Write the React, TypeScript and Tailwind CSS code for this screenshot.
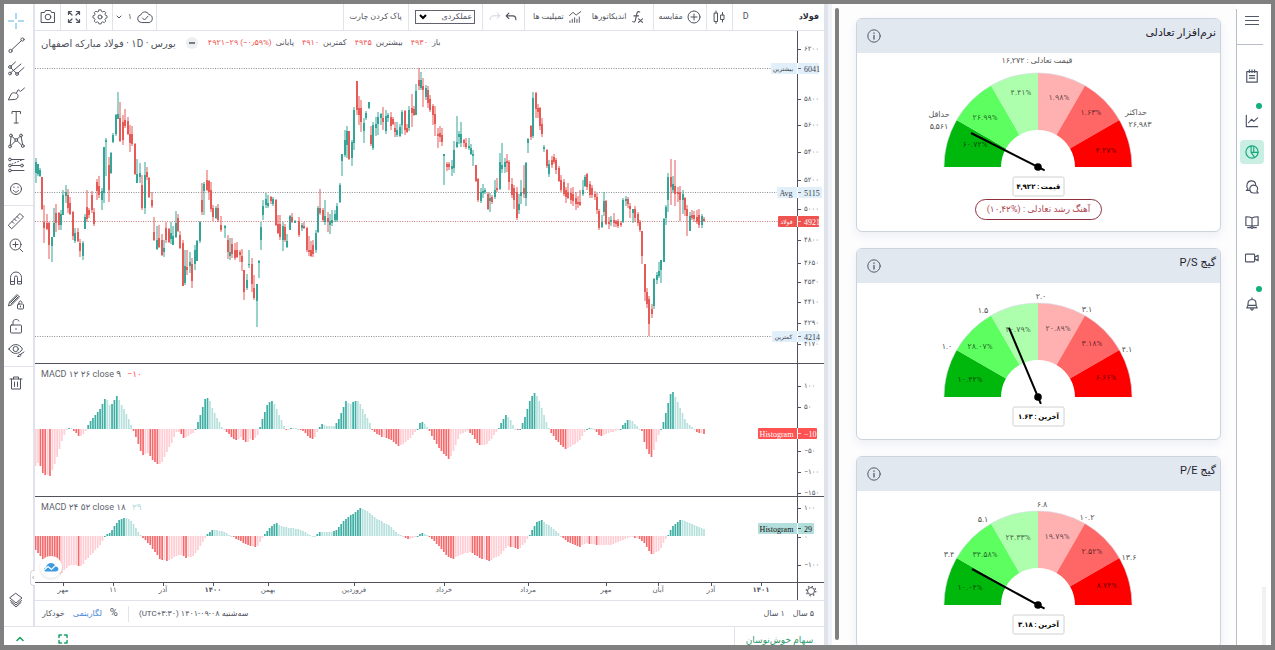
import type { ReactNode } from 'react';

const FA = "font-['Roboto','DejaVu_Sans',sans-serif]";

type Candle = [number, number, number, number, number, 0 | 1];

// x, high, low, body top, body bottom, rising
const candles: Candle[] = [
  [36, 158, 183, 162, 173, 1], [38, 164, 176, 164, 174, 1], [40, 168, 177, 170, 176, 1], [42, 177, 210, 177, 209, 0],
  [44, 205, 243, 222, 228, 0], [47, 214, 230, 223, 229, 0], [49, 222, 259, 223, 245, 0], [52, 237, 262, 237, 246, 1],
  [54, 208, 237, 223, 237, 1], [56, 204, 232, 213, 223, 0], [59, 212, 230, 213, 225, 0], [61, 210, 230, 214, 225, 1],
  [63, 190, 215, 195, 215, 1], [66, 185, 203, 192, 196, 1], [68, 189, 213, 195, 208, 0], [70, 197, 215, 203, 214, 0],
  [73, 211, 240, 212, 236, 0], [75, 228, 243, 233, 241, 1], [78, 228, 242, 232, 241, 0], [80, 239, 257, 243, 251, 0],
  [83, 241, 260, 243, 256, 1], [85, 214, 229, 217, 229, 1], [87, 190, 222, 207, 219, 0], [89, 208, 218, 210, 215, 0],
  [92, 191, 213, 195, 210, 0], [94, 208, 226, 212, 224, 0], [97, 179, 200, 182, 191, 0], [99, 176, 198, 186, 195, 0],
  [102, 188, 210, 191, 200, 1], [104, 147, 203, 147, 193, 1], [106, 138, 176, 140, 142, 1], [109, 157, 202, 165, 190, 0],
  [111, 152, 174, 153, 173, 1], [113, 133, 143, 135, 142, 1], [116, 114, 136, 115, 134, 1], [118, 92, 119, 114, 119, 1],
  [120, 102, 142, 118, 141, 0], [123, 115, 145, 122, 140, 0], [125, 109, 128, 120, 126, 0], [128, 117, 135, 121, 134, 0],
  [130, 125, 152, 134, 143, 0], [132, 126, 146, 134, 144, 0], [135, 143, 175, 144, 174, 0], [137, 159, 183, 174, 183, 1],
  [140, 163, 183, 173, 177, 1], [142, 175, 210, 185, 208, 0], [145, 162, 214, 175, 208, 1], [147, 167, 180, 172, 177, 0],
  [149, 177, 198, 178, 197, 0], [152, 192, 208, 200, 206, 0], [154, 217, 241, 232, 240, 0], [157, 226, 250, 240, 249, 1],
  [159, 225, 248, 238, 247, 0], [162, 234, 256, 240, 255, 0], [164, 240, 257, 248, 252, 1], [166, 222, 243, 228, 240, 0],
  [169, 228, 243, 229, 242, 0], [171, 222, 244, 233, 239, 1], [173, 226, 245, 236, 245, 1], [176, 211, 238, 223, 237, 1],
  [178, 214, 232, 218, 231, 0], [180, 231, 249, 235, 248, 0], [183, 240, 286, 243, 286, 0], [185, 250, 285, 266, 283, 1],
  [187, 250, 275, 267, 270, 0], [190, 252, 273, 262, 266, 1], [192, 258, 288, 264, 281, 0], [195, 245, 270, 250, 264, 1],
  [197, 240, 261, 241, 261, 1], [200, 221, 243, 222, 241, 1], [202, 183, 215, 200, 212, 0], [204, 182, 215, 184, 191, 1],
  [207, 170, 191, 180, 190, 0], [209, 180, 200, 181, 192, 0], [211, 182, 212, 190, 209, 0], [213, 205, 221, 208, 217, 0],
  [216, 206, 219, 208, 218, 1], [218, 204, 222, 208, 220, 0], [221, 216, 232, 225, 230, 0], [225, 225, 238, 226, 228, 1],
  [228, 235, 259, 240, 252, 0], [230, 238, 260, 252, 256, 1], [232, 238, 258, 244, 254, 0], [235, 243, 260, 250, 258, 0],
  [237, 242, 258, 250, 257, 0], [240, 250, 262, 252, 255, 0], [242, 249, 271, 256, 262, 0], [244, 270, 300, 270, 292, 0],
  [247, 274, 290, 280, 288, 1], [249, 250, 268, 264, 265, 1], [252, 258, 292, 264, 284, 0], [254, 275, 300, 288, 298, 0],
  [257, 284, 327, 284, 301, 1], [259, 260, 278, 261, 263, 1], [261, 222, 250, 227, 240, 1], [263, 200, 220, 206, 215, 1],
  [266, 193, 208, 199, 205, 1], [268, 195, 208, 203, 206, 1], [271, 196, 204, 197, 201, 0], [273, 197, 206, 199, 204, 1],
  [276, 199, 226, 200, 225, 0], [278, 215, 234, 224, 233, 0], [280, 215, 240, 224, 237, 0], [283, 222, 251, 226, 240, 1],
  [285, 224, 242, 227, 240, 0], [287, 234, 248, 241, 247, 1], [290, 215, 230, 216, 230, 1], [292, 213, 223, 217, 222, 0],
  [295, 220, 223, 221, 223, 1], [299, 217, 237, 221, 235, 0], [302, 223, 231, 225, 228, 1], [304, 222, 229, 226, 228, 0],
  [307, 227, 252, 228, 250, 0], [309, 236, 256, 250, 252, 0], [311, 241, 257, 250, 256, 0], [313, 240, 257, 245, 254, 0],
  [316, 230, 253, 233, 250, 1], [318, 206, 233, 208, 232, 1], [320, 189, 215, 208, 213, 0], [323, 208, 222, 210, 220, 0],
  [325, 200, 225, 216, 222, 1], [328, 212, 232, 218, 222, 0], [330, 214, 234, 221, 225, 1], [332, 210, 226, 220, 223, 1],
  [335, 210, 222, 214, 220, 1], [337, 203, 222, 206, 220, 1], [340, 183, 203, 185, 202, 1], [342, 154, 176, 154, 161, 1],
  [345, 130, 157, 140, 155, 1], [347, 126, 158, 131, 145, 1], [349, 131, 160, 131, 159, 0], [352, 140, 166, 142, 158, 1],
  [354, 107, 150, 110, 143, 1], [357, 81, 115, 81, 110, 0], [359, 96, 125, 108, 115, 0], [361, 100, 132, 108, 122, 0],
  [364, 118, 143, 123, 131, 1], [366, 111, 120, 113, 118, 1], [369, 102, 109, 102, 108, 1], [371, 126, 146, 135, 144, 0],
  [373, 122, 150, 125, 148, 1], [376, 117, 136, 124, 128, 1], [378, 112, 135, 117, 124, 1], [381, 113, 125, 114, 118, 1],
  [383, 107, 130, 118, 122, 0], [386, 110, 134, 116, 131, 1], [388, 113, 122, 115, 118, 1], [391, 112, 130, 117, 126, 0],
  [393, 117, 125, 119, 124, 0], [395, 122, 137, 128, 132, 0], [397, 122, 137, 130, 135, 1], [400, 124, 137, 127, 136, 1],
  [402, 110, 134, 112, 125, 1], [405, 110, 135, 111, 130, 0], [407, 124, 133, 128, 132, 0], [409, 106, 131, 110, 128, 1],
  [412, 94, 127, 108, 113, 0], [414, 106, 116, 109, 115, 0], [416, 84, 115, 91, 115, 1], [419, 68, 90, 80, 86, 0],
  [421, 72, 90, 80, 88, 1], [423, 78, 107, 86, 90, 0], [426, 85, 100, 88, 97, 1], [428, 86, 108, 90, 103, 0],
  [430, 95, 112, 99, 110, 0], [433, 104, 125, 106, 115, 0], [435, 106, 136, 114, 124, 0], [438, 128, 148, 134, 136, 0],
  [440, 126, 142, 133, 137, 0], [442, 128, 146, 135, 142, 0], [444, 154, 185, 154, 156, 1], [447, 162, 171, 164, 167, 0],
  [449, 162, 170, 164, 167, 0], [452, 160, 176, 166, 169, 1], [454, 141, 173, 150, 168, 1], [457, 116, 148, 142, 147, 1],
  [459, 131, 144, 134, 137, 1], [461, 122, 147, 134, 143, 1], [464, 139, 147, 140, 143, 0], [466, 138, 149, 143, 147, 0],
  [469, 138, 150, 146, 148, 1], [471, 144, 155, 148, 154, 1], [473, 150, 166, 154, 156, 1], [476, 165, 182, 165, 181, 0],
  [478, 178, 202, 179, 200, 0], [481, 188, 203, 192, 201, 1], [483, 184, 198, 191, 193, 1], [485, 188, 194, 190, 192, 1],
  [488, 192, 210, 194, 209, 0], [490, 193, 212, 198, 201, 1], [492, 195, 204, 197, 202, 0], [495, 180, 199, 190, 197, 1],
  [497, 178, 192, 188, 190, 0], [500, 153, 190, 162, 189, 1], [502, 143, 173, 165, 169, 1], [505, 158, 173, 162, 167, 1],
  [507, 154, 172, 161, 163, 0], [509, 160, 190, 162, 182, 0], [512, 178, 198, 184, 195, 0], [514, 185, 209, 188, 200, 0],
  [517, 187, 220, 192, 218, 0], [519, 194, 214, 204, 210, 1], [521, 180, 204, 192, 196, 1], [524, 165, 198, 188, 194, 0],
  [526, 162, 206, 163, 198, 1], [528, 138, 153, 139, 143, 1], [531, 125, 140, 126, 137, 0], [533, 92, 138, 98, 136, 1],
  [536, 92, 118, 93, 109, 0], [538, 104, 118, 108, 112, 0], [540, 107, 130, 108, 126, 0], [542, 118, 137, 124, 134, 0],
  [544, 145, 152, 147, 149, 1], [547, 149, 168, 150, 166, 0], [549, 160, 177, 164, 174, 1], [552, 156, 168, 160, 165, 0],
  [554, 154, 164, 157, 162, 0], [556, 158, 174, 160, 170, 0], [559, 166, 182, 168, 181, 0], [561, 175, 192, 180, 190, 0],
  [564, 179, 196, 182, 194, 0], [566, 187, 203, 190, 197, 0], [568, 183, 199, 192, 198, 0], [571, 188, 204, 193, 200, 0],
  [573, 187, 206, 194, 201, 0], [576, 192, 210, 198, 204, 0], [578, 196, 208, 202, 204, 0], [580, 190, 206, 202, 205, 0],
  [583, 180, 196, 190, 194, 1], [585, 175, 187, 177, 186, 1], [587, 173, 190, 174, 187, 0], [590, 181, 198, 184, 195, 0],
  [592, 185, 198, 188, 195, 0], [595, 191, 200, 194, 197, 0], [597, 193, 214, 197, 210, 0], [599, 209, 230, 211, 228, 0],
  [602, 215, 228, 222, 227, 1], [604, 192, 216, 201, 212, 1], [606, 200, 225, 201, 224, 0], [609, 217, 229, 222, 224, 0],
  [611, 216, 226, 220, 222, 1], [614, 213, 227, 220, 223, 0], [616, 220, 227, 221, 224, 0], [618, 219, 228, 221, 226, 0],
  [621, 221, 227, 223, 225, 0], [623, 198, 223, 200, 222, 1], [626, 196, 206, 199, 201, 1], [628, 197, 208, 199, 204, 0],
  [630, 203, 218, 206, 209, 0], [633, 209, 223, 209, 213, 1], [635, 206, 222, 209, 218, 0], [638, 212, 226, 214, 223, 0],
  [640, 220, 232, 222, 230, 0], [642, 231, 264, 231, 256, 0], [645, 264, 301, 264, 292, 0], [647, 288, 308, 292, 304, 0],
  [649, 296, 336, 299, 324, 0], [652, 304, 318, 309, 314, 0], [654, 278, 309, 279, 306, 1], [657, 272, 284, 275, 280, 1],
  [659, 262, 278, 271, 276, 1], [661, 260, 283, 260, 270, 1], [664, 218, 262, 219, 262, 1], [666, 205, 225, 207, 218, 1],
  [668, 173, 212, 177, 200, 1], [671, 159, 205, 177, 187, 0], [673, 176, 193, 184, 190, 1], [675, 160, 206, 186, 194, 0],
  [678, 187, 202, 192, 194, 0], [680, 186, 221, 192, 200, 0], [683, 190, 214, 194, 200, 1], [685, 197, 216, 198, 210, 0],
  [687, 205, 236, 209, 216, 0], [690, 212, 231, 216, 231, 1], [692, 210, 220, 215, 218, 0], [694, 211, 222, 215, 219, 0],
  [697, 210, 224, 217, 222, 0], [699, 209, 228, 215, 225, 0], [702, 214, 228, 216, 225, 1], [704, 217, 222, 219, 221, 0],
];

// x, y corner points of each histogram outline
const macdFast: number[][] = [
  [35, 467], [38, 463], [40, 465], [43, 474], [50, 476], [53, 468], [58, 455], [62, 440], [66, 431], [69, 428], [72, 428],
  [74, 431], [80, 437], [84, 434], [86, 430], [88, 425], [95, 415], [100, 409], [106, 396], [109, 405], [112, 404], [117, 396],
  [120, 402], [127, 415], [131, 425], [133, 430], [137, 440], [142, 455], [148, 453], [152, 459], [157, 464], [161, 464],
  [164, 458], [172, 442], [176, 432], [180, 432], [183, 438], [188, 436], [193, 433], [195, 430], [200, 416], [205, 399],
  [209, 398], [213, 410], [218, 420], [222, 427], [226, 431], [232, 438], [237, 440], [241, 437], [247, 444], [250, 439],
  [253, 440], [258, 435], [259, 431], [262, 420], [268, 402], [273, 401], [277, 410], [283, 424], [286, 430], [288, 431],
  [290, 428], [296, 428], [299, 430], [304, 431], [309, 438], [314, 439], [318, 430], [321, 424], [328, 426], [334, 426],
  [338, 421], [343, 408], [346, 401], [350, 405], [354, 401], [359, 401], [363, 410], [370, 423], [372, 430], [380, 436],
  [390, 439], [399, 446], [405, 443], [411, 437], [417, 430], [421, 421], [425, 424], [429, 430], [433, 438], [441, 451],
  [449, 459], [454, 450], [460, 434], [467, 431], [473, 435], [478, 445], [486, 445], [492, 438], [498, 430], [502, 421],
  [506, 415], [511, 420], [514, 428], [517, 431], [520, 429], [524, 420], [530, 400], [534, 392], [538, 397], [544, 415],
  [548, 426], [550, 431], [557, 441], [565, 449], [572, 446], [580, 440], [586, 429], [591, 427], [595, 430], [600, 436],
  [606, 434], [615, 431], [620, 430], [623, 425], [628, 420], [632, 421], [638, 427], [642, 431], [645, 445], [651, 458],
  [654, 449], [658, 437], [661, 429], [664, 420], [670, 395], [673, 392], [677, 400], [684, 417], [688, 424], [694, 429],
  [697, 432], [700, 433], [705, 434],
];

const macdSlow: number[][] = [
  [35, 549], [45, 562], [58, 574], [61, 574], [66, 568], [72, 565], [82, 566], [86, 560], [92, 554], [100, 545], [104, 538],
  [106, 534], [110, 533], [115, 525], [120, 519], [127, 518], [132, 522], [137, 530], [141, 536], [143, 538], [150, 545],
  [160, 559], [166, 561], [173, 558], [180, 554], [186, 558], [193, 556], [198, 550], [204, 540], [208, 533], [212, 530],
  [218, 530], [226, 533], [231, 536], [235, 538], [242, 542], [248, 545], [257, 547], [261, 540], [264, 535], [270, 527],
  [276, 523], [283, 527], [292, 528], [302, 530], [310, 535], [314, 537], [320, 532], [330, 532], [337, 530], [343, 521],
  [350, 516], [360, 508], [368, 511], [376, 518], [390, 526], [398, 534], [403, 536], [408, 539], [413, 538], [417, 536],
  [421, 533], [425, 534], [428, 536], [431, 538], [437, 544], [447, 556], [453, 559], [462, 554], [471, 552], [480, 558],
  [489, 561], [500, 555], [508, 546], [519, 549], [525, 543], [529, 536], [533, 528], [537, 522], [541, 520], [550, 526],
  [558, 533], [563, 538], [570, 543], [579, 547], [586, 543], [598, 545], [612, 545], [622, 540], [630, 537], [638, 538],
  [644, 543], [652, 555], [660, 550], [665, 540], [668, 535], [673, 526], [680, 520], [686, 521], [695, 525], [705, 529],
];

function sample(points: number[][], x: number) {
  const i = points.findIndex((p) => p[0] >= x);
  if (i <= 0) return points[0][1];
  const [x0, y0] = points[i - 1];
  const [x1, y1] = points[i];
  return y0 + ((y1 - y0) * (x - x0)) / (x1 - x0);
}

function Histogram({ points, zero }: { points: number[][]; zero: number }) {
  const bars: ReactNode[] = [];
  let last = points[0][1];
  for (let i = 0; i < 281; i++) {
    const x = 35.6 + i * 2.387;
    const y = Math.round(sample(points, x));
    let fill;
    if (y <= zero) fill = y < last ? '#3fafa4' : '#b8e1dd';
    else fill = y > last ? '#f56a6c' : '#ffcdd4';
    last = y;
    bars.push(<rect key={i} x={x - 0.8} y={Math.min(y, zero)} width={1.7} height={Math.max(1, Math.abs(y - zero))} fill={fill} />);
  }
  return <g>{bars}</g>;
}

const axisLabels: [number, string][] = [
  [49, '۶۲۰۰'], [99, '۵۸۰۰'], [125, '۵۶۰۰'], [152, '۵۴۰۰'], [180, '۵۲۰۰'], [209, '۵۰۰۰'], [240, '۴۸۰۰'], [263, '۴۶۵۰'],
  [282, '۴۵۳۰'], [302, '۴۴۱۰'], [323, '۴۲۹۰'], [344, '۴۱۷۰'], [386, '۱۰۰'], [407, '۵۰'], [451, '−۵۰'], [472, '−۱۰۰'],
  [493, '−۱۵۰'], [508, '۱۰۰'], [537, '۰'], [565, '−۱۰۰'],
];

const timeLabels: [number, string, boolean][] = [
  [63, 'مهر', false], [113, '۱۱', false], [163, 'آذر', false], [213, '۱۴۰۰', true], [268, 'بهمن', false], [354, 'فروردین', false],
  [444, 'خرداد', false], [528, 'مرداد', false], [606, 'مهر', false], [658, 'آبان', false], [711, 'آذر', false], [761, '۱۴۰۱', true],
];

const tags = [
  { x: 771, y: 69, w: 48, label: 'بیشترین', value: '6041', bg: '#e1effb', fg: '#3a3f4a' },
  { x: 777, y: 193, w: 45, label: 'Avg', value: '5115', bg: '#e1effb', fg: '#3a3f4a' },
  { x: 778, y: 222, w: 41, label: 'فولاد', value: '4921', bg: '#ef5350', fg: '#ffffff' },
  { x: 772, y: 337, w: 47, label: 'کمترین', value: '4214', bg: '#e1effb', fg: '#3a3f4a' },
  { x: 758, y: 434, w: 59, label: 'Histogram', value: '−10', bg: '#ff5252', fg: '#ffffff' },
  { x: 758, y: 529, w: 56, label: 'Histogram', value: '29', bg: '#b2dfdb', fg: '#111111' },
];

function Chart() {
  return (
    <svg viewBox="35 31 789 569" className="block h-full w-full" role="img" aria-label="نمودار فولاد">
      <g strokeWidth="1" strokeDasharray="1 1.4">
        <path d="M35 68.5H772M35 192.5H778M35 336.5H772" stroke="#8a8d96" />
        <path d="M35 221.5H778" stroke="#c77b7b" />
      </g>
      {candles.map(([x, hi, lo, top, bottom, up], i) => (
        <g key={i} fill={up ? '#35a598' : '#e45b58'}>
          <rect x={x - 0.5} y={hi} width={1} height={lo - hi} />
          <rect x={x - 1} y={top} width={2} height={bottom - top} />
        </g>
      ))}
      <Histogram points={macdFast} zero={429} />
      <Histogram points={macdSlow} zero={536} />
      <path d="M35 363.5H824M35 496.5H824M35 582.5H824M797.5 31V600" stroke="#50535e" fill="none" />
      {axisLabels.map(([y, text]) => (
        <g key={y}>
          <path d={`M797 ${y}.5h4`} stroke="#50535e" />
          <text x={804} y={y} fontSize="7" fill="#555a66" dominantBaseline="central">{text}</text>
        </g>
      ))}
      {timeLabels.map(([x, text, bold]) => (
        <g key={x}>
          <path d={`M${x}.5 582v4`} stroke="#50535e" />
          <text x={x} y={590} fontSize="7" fontWeight={bold ? 700 : 400} fill="#555a66" textAnchor="middle" dominantBaseline="central">{text}</text>
        </g>
      ))}
      {tags.map((t) => (
        <g key={t.y}>
          <rect x={t.x} y={t.y - 6} width={t.w} height={11} rx="1" fill={t.bg} />
          <path d={`M797.5 ${t.y - 6}v11`} stroke="#ffffff" />
          <path d={`M798 ${t.y - 0.5}h3`} stroke={t.fg} strokeOpacity="0.7" />
          <g fontFamily="'Liberation Serif','DejaVu Sans',serif" fill={t.fg} dominantBaseline="central">
            <text x={(t.x + 795) / 2} y={t.y} fontSize={t.label > 'z' ? 6 : 8} textAnchor="middle">{t.label}</text>
            <text x={804} y={t.y} fontSize="8">{t.value}</text>
          </g>
        </g>
      ))}
      <g fill="none" stroke="#50535e">
        <circle cx="811" cy="591" r="3.5" />
        <circle cx="811" cy="591" r="4.8" strokeWidth="1.2" strokeDasharray="1.5 2.27" />
      </g>
    </svg>
  );
}

function Icon({ children, size = 'size-[18px]', box = 18, weight = 1 }: { children: ReactNode; size?: string; box?: number; weight?: number }) {
  return (
    <svg viewBox={`0 0 ${box} ${box}`} className={`${size} shrink-0`} fill="none" stroke="currentColor" strokeWidth={weight} strokeLinecap="round" strokeLinejoin="round" aria-hidden="true">
      {children}
    </svg>
  );
}

const drawTools: { name: string; icon: ReactNode }[] = [
  { name: 'نشانگر', icon: <path d="M1 9h6M11 9h6M9 1v6M9 11v6" stroke="#56b3e6" strokeLinecap="butt" /> },
  { name: 'خط روند', icon: <><circle cx="15.5" cy="3.5" r="1.6" /><circle cx="3.5" cy="15" r="1.6" /><path d="M14.3 4.7 4.7 13.8" /></> },
  { name: 'چنگال', icon: <><circle cx="3" cy="7" r="1.4" /><circle cx="3" cy="13.5" r="1.4" /><circle cx="10" cy="14" r="1.4" /><path d="M4 6l4.500-4M4 12.500 14 4M11 13l6-5.500M4 8l5.200 5" /></> },
  { name: 'قلم', icon: <><path d="M1.500 15.500 4.500 9.500c2-1.500 6-.5 6.500 2 .3 2.500-1.500 4-3.500 4z" /><path d="M9.500 9 11 6c.3-.8 1 .2 1.500 1 .5.600 1 .5 1.500 0L17.500 4" /></> },
  { name: 'متن', icon: <path d="M5 5.500V3.500h8.500v2M9.200 3.500V15M7.200 15h4" /> },
  { name: 'الگو', icon: <><circle cx="4" cy="3.500" r="1.400" /><circle cx="14" cy="3.500" r="1.400" /><circle cx="9.200" cy="8" r="1.400" /><circle cx="3" cy="14.500" r="1.400" /><circle cx="15.800" cy="14" r="1.400" /><path d="M4 5 3.200 13M5 4.500l3.200 2.800M10.200 7l3-2.600M14.200 5l1.400 7.600M4 13.500l4.200-4.400M10.300 9l4.300 4.200" /></> },
  { name: 'پیش‌بینی', icon: <><circle cx="3" cy="3.500" r="1.400" /><circle cx="3" cy="9.500" r="1.400" /><circle cx="15" cy="9.500" r="1.400" /><circle cx="3" cy="14.500" r="1.400" /><path d="M4.500 3.500H17M4.500 9.500h9M4.500 14.500H17" /><path d="M5 8l10-4" strokeDasharray="1 2" /></> },
  { name: 'شکلک', icon: <><circle cx="9" cy="9" r="5.500" /><path d="M6.500 10.500c1 2.200 4 2.200 5 0M7 7v.6M11 7v.6" /></> },
];

const measureTools: { name: string; icon: ReactNode }[] = [
  { name: 'خط‌کش', icon: <path d="M1.500 13 13 1.500l3.500 3.500L5 16.500zM5 9.500l1.800 1.800M7.500 7l1.800 1.800M10 4.500l1.800 1.800" /> },
  { name: 'بزرگ‌نمایی', icon: <><circle cx="8.500" cy="8.500" r="5.500" /><path d="M12.700 12.700l3 3M8.500 6v5M6 8.500h5" /></> },
];

const lockTools: { name: string; icon: ReactNode }[] = [
  { name: 'آهنربا', icon: <path d="M3.500 15V8.500a5.500 5.500 0 0 1 11 0V15h-4V8.500a1.500 1.500 0 0 0-3 0V15zM3.500 12.500h4M10.500 12.500h4" /> },
  { name: 'قفل رسم', icon: <><path d="M1.500 12.500l1-3.500 7.500-7.500 2.500 2.500-7.500 7.500zM3.500 9.500l6.500-6.500M4 11l7-7" /><rect x="10.500" y="11" width="6" height="5" rx="1" /><path d="M12 11V9.500c0-2 3-2 3 0M13.500 13v1" /></> },
  { name: 'قفل', icon: <><rect x="3.500" y="8" width="11" height="8" rx="1" /><path d="M6 8V5c0-3 5-3.500 6-1M9 11.500v1" /></> },
  { name: 'نمایش', icon: <><path d="M2 8c3.500-6 10-6 13.500 0-3.500 6-10 6-13.500 0z" /><circle cx="8.700" cy="8" r="2.600" /><path d="M11 15.500c.5-2 1.500-2.500 3-2 .5 1.500-1 2-3 2zM14 13l3-2" /></> },
];

function ToolButton({ name, icon }: { name: string; icon: ReactNode }) {
  return (
    <button type="button" aria-label={name} className="flex h-6 w-full items-center justify-center pr-1.5">
      <Icon>{icon}</Icon>
    </button>
  );
}

function DrawingBar() {
  return (
    <div className="relative flex w-[31px] shrink-0 flex-col border-r-2 border-[#e0e3eb] pt-[5px] text-[#50545f]">
      {drawTools.map((t) => <ToolButton key={t.name} {...t} />)}
      <div className="mt-1 mb-[3px] border-t border-[#e0e3eb]" />
      {measureTools.map((t) => <ToolButton key={t.name} {...t} />)}
      <div className="h-[9px]" />
      {lockTools.map((t) => <ToolButton key={t.name} {...t} />)}
      <div className="my-1 border-t border-[#e0e3eb]" />
      <ToolButton name="حذف" icon={<path d="M3 5h12M6.500 5V3h5v2M4.500 5v10h9V5M7.500 8v4.500M10.500 8v4.500" />} />
      <div className="mt-auto mb-3.5">
        <ToolButton name="لایه‌ها" icon={<path d="M9 2.500l6 4.500-6 5-6-5zM3.500 9.500 9 14l5.500-4.500M4 11.500 9 16l5-4.500" />} />
      </div>
      <button type="button" aria-label="بستن نوار" className="absolute -right-0.5 bottom-10 h-4 w-[5px] rounded-l-sm border border-r-0 border-[#d4d8e2] bg-white text-[7px] leading-[13px] text-[#787b86]">‹</button>
    </div>
  );
}

const cell = 'flex h-full items-center justify-center border-[#e0e3eb]';

function TopBar() {
  return (
    <div className="flex h-[27px] shrink-0 items-center border-b border-[#e0e3eb] text-[9px] text-[#50535e]">
      <button type="button" aria-label="عکس" className={`${cell} w-[26px] border-r`}>
        <Icon><path d="M2.500 4.500h3l1-2h5l1 2h3v10h-13z" /><circle cx="9" cy="9" r="2.800" /></Icon>
      </button>
      <button type="button" aria-label="تمام صفحه" className={`${cell} w-[26px] border-r`}>
        <Icon weight={1.2}><path d="M3.500 6.500v-3h3M4 4l3 3M11.500 3.500h3v3M14 4l-3 3M3.500 11.500v3h3M4 14l3-3M14.500 11.500v3h-3M14 14l-3-3" /></Icon>
      </button>
      <button type="button" aria-label="تنظیمات" className={`${cell} w-[26px] border-r`}>
        <Icon>
          <path d="M7.800 2.200h2.400l.5 1.700 1.400.6 1.600-.9 1.700 1.700-.9 1.600.6 1.400 1.700.5v2.400l-1.700.5-.6 1.400.9 1.600-1.700 1.700-1.600-.9-1.400.6-.5 1.700H7.800l-.5-1.700-1.400-.6-1.600.9-1.700-1.700.9-1.600-.6-1.400-1.700-.5V8.800l1.700-.5.6-1.400-.9-1.600 1.700-1.700 1.600.9 1.400-.6z" transform="translate(.9 -.1) scale(.9)" />
          <circle cx="9" cy="9" r="2" />
        </Icon>
      </button>
      <button type="button" className={`${cell} w-[44px] gap-1 border-r`}>
        <Icon size="size-2" box={8}><path d="M2 3 4 5 6 3" /></Icon>
        <span className="ml-px text-[8px]">۱</span>
        <Icon><path d="M5 14.500a3.800 3.800 0 0 1-.3-7.500C6 3 11.500 3 12.700 6.500c4.500 0 5 7.300.8 8zM6.500 10l2 2 3.500-3.800" /></Icon>
      </button>
      <div className="flex-1" />
      <button type="button" dir="rtl" className={`${cell} w-[66px] border-x text-[8px]`}>پاک کردن چارت</button>
      <div className={`${cell} w-[74px] border-r`}>
        <div className="relative h-[14px] w-[60px]">
          <select dir="rtl" aria-label="نوع نمودار" className="block h-full w-full appearance-none border border-[#60636d] bg-white px-0.5 text-[8px] leading-3 text-[#50535e]">
            <option>عملکردی</option>
          </select>
          <svg viewBox="0 0 8 6" className="pointer-events-none absolute top-1 left-1 h-1.5 w-2" fill="none" stroke="#000" strokeWidth="2"><path d="M1 1l3 3 3-3" /></svg>
        </div>
      </div>
      <div className={`${cell} w-[42px] gap-1 border-r`}>
        <button type="button" aria-label="جلو" className="text-[#c3c6ce]"><Icon size="size-3.5"><path d="M13 4l3.500 3.500L13 11M16 7.500H8c-3 0-4 2-4 5" /></Icon></button>
        <button type="button" aria-label="عقب"><Icon size="size-3.5" weight={1.5}><path d="M5 4 1.500 7.500 5 11M2 7.500h8c3 0 4 2 4 5" /></Icon></button>
      </div>
      <div className={`${cell} w-[129px] gap-2.5 border-r`}>
        <button type="button" className="flex items-center gap-1 text-[8px]">
          <span dir="rtl">تمپلیت ها</span>
          <Icon size="size-3.5" weight={1.2}><path d="M2 7l4.500-4 4 3.500L16.500 2M2.500 16v-2M5.500 16v-4M8.500 16v-6M11.500 16v-4M14.500 16V9" /></Icon>
        </button>
        <button type="button" className="flex items-center gap-1 text-[8px]">
          <span dir="rtl">اندیکاتورها</span>
          <Icon size="size-3.5" weight={1.4}><path d="M12.500 2.500c-3-1.500-3.500 1-4 3.500L7 13c-.5 2.500-2 3-3.500 2M5 7.500h6M11 11.500l5 4.500M16 11.500l-5 4.500" /></Icon>
        </button>
      </div>
      <button type="button" className={`${cell} w-[53px] gap-1 border-r text-[8px]`}>
        <span dir="rtl">مقایسه</span>
        <Icon size="size-3.5" box={14}><circle cx="7" cy="7" r="6" /><path d="M7 4v6M4 7h6" /></Icon>
      </button>
      <button type="button" aria-label="کندل" className={`${cell} w-[26px] border-r`}>
        <Icon><path d="M4.500 5h3v8.500h-3zM6 3V5M6 13.500V15.500M11 7h3v4.500h-3zM12.500 4.500V7M12.500 11.500V14" /></Icon>
      </button>
      <button type="button" className={`${cell} w-[26px]`}>D</button>
      <div className="w-10" />
      <button type="button" dir="rtl" className="h-full pr-[5px] text-[8px] font-bold text-[#2a2e39]">فولاد</button>
    </div>
  );
}

function Legend() {
  const parts = [
    ['پایانی', '۴۹۲۱−۲۹ (−۰٫۵۹%)'],
    ['کمترین', '۴۹۱۰'],
    ['بیشترین', '۴۹۴۵'],
    ['باز', '۴۹۳۰'],
  ];
  return (
    <div className="absolute top-1 left-1.5 flex h-4 items-center gap-2 text-[8px] whitespace-nowrap text-[#50535e]">
      <span dir="rtl" className="text-[10px]">بورس · <bdi>۱D</bdi> · فولاد مبارکه اصفهان</span>
      <span className="mx-0.5 flex size-3 items-center justify-center rounded-full bg-[#eceef2]"><span className="h-0.5 w-1.5 bg-[#787b86]" /></span>
      {parts.map(([label, value]) => (
        <span key={label} className="flex items-center gap-1">
          <span dir="ltr" className="text-[#ef5350]">{value}</span>
          <span dir="rtl">{label}</span>
        </span>
      ))}
    </div>
  );
}

function ChartArea() {
  return (
    <div className="relative min-h-0 flex-1">
      <Chart />
      <Legend />
      <div className="absolute top-[337px] left-1.5 flex gap-1.5 text-[9px] leading-3 text-[#60636d]">
        <span>MACD ۱۲ ۲۶ close ۹</span><span className="text-[#ff5252]">−۱۰</span>
      </div>
      <div className="absolute top-[470px] left-1.5 flex gap-1.5 text-[9px] leading-3 text-[#60636d]">
        <span>MACD ۲۴ ۵۲ close ۱۸</span><span className="text-[#b2dfdb]">۲۹</span>
      </div>
      <a href="#" aria-label="TradingView" className="absolute bottom-[22px] left-[5px] flex size-[22px] items-center justify-center rounded-full bg-white shadow">
        <svg viewBox="0 0 16 10" className="h-2.5 w-4">
          <path d="M3 9.500C1.500 9.500.8 8.600.8 7.500S2 5.500 3 5.500C3.500 2.500 5.500 1 8 1c2.300 0 4 1.300 4.700 3.500 1.500 0 2.700 1 2.700 2.500s-1 2.500-2.600 2.500z" fill="#3f9be0" />
          <path d="M.5 8.500l4.500-4 3.500 3L13 3" stroke="#fff" strokeWidth="1.200" fill="none" />
        </svg>
      </a>
    </div>
  );
}

function ChartFooter() {
  return (
    <div className="flex h-[26px] shrink-0 items-center border-t border-[#e0e3eb] px-[7px] text-[8px] text-[#50535e]">
      <button type="button" dir="rtl">خودکار</button>
      <button type="button" dir="rtl" className="ml-2 text-[#4a86d8]">لگاریتمی</button>
      <button type="button" className="ml-2 text-[11px]">%</button>
      <span className="mx-2.5 h-4 border-l border-[#e0e3eb]" />
      <button type="button" className="flex gap-0.5">
        <span dir="ltr">(UTC+۳:۳۰)</span>
        <span dir="ltr">۱۴۰۱-۰۹-۰۸</span>
        <span dir="rtl">سه‌شنبه</span>
      </button>
      <div className="ml-auto flex gap-2 pr-[3px]">
        <button type="button" dir="rtl">۱ سال</button>
        <button type="button" dir="rtl">۵ سال</button>
      </div>
    </div>
  );
}

function BottomBar() {
  return (
    <div className="flex h-[19px] shrink-0 overflow-hidden border-t border-[#e0e3eb] text-[#22a06b]">
      <button type="button" aria-label="باز کردن" className="h-6 w-8 pl-3"><Icon size="size-2" box={8} weight={1.6}><path d="M1 5.500 4 2.500l3 3" /></Icon></button>
      <button type="button" aria-label="بزرگ کردن" className="ml-5 h-6 w-4 pl-0.5"><Icon size="size-2.5" box={10} weight={1.5}><path d="M1 3.500V1h2.500M6.500 1H9v2.500M1 6.500V9h2.500M9 6.500V9H6.500" /></Icon></button>
      <button type="button" dir="rtl" className="ml-auto h-7 w-[90px] shrink-0 border-l border-[#e0e3eb] text-[9px] font-medium text-[#2e9a6b]">سهام خوش‌نوسان</button>
    </div>
  );
}

type Mark = [number, number, string];

const sliceColors = ['#00b80b', '#5cff5f', '#adffae', '#ffb1b1', '#ff6666', '#ff0000'];

function slice(i: number) {
  const a = Math.PI - (i * Math.PI) / 6;
  const b = a - Math.PI / 6;
  const p = (r: number, t: number) => `${(r * Math.cos(t)).toFixed(2)} ${(-r * Math.sin(t)).toFixed(2)}`;
  return `M${p(94, a)}A94 94 0 0 1 ${p(94, b)}L${p(37, b)}A37 37 0 0 0 ${p(37, a)}Z`;
}

function Gauge({ percents, marks, needle, value, height }: { percents: Mark[]; marks: Mark[]; needle: [number, number]; value: string; height: number }) {
  const [nx, ny] = needle;
  return (
    <svg viewBox={`-181 -114 363 ${height}`} className="block w-full" role="img" aria-label={value}>
      {sliceColors.map((c, i) => <path key={c} d={slice(i)} fill={c} />)}
      <path d="M-94 0A94 94 0 0 1 94 0" fill="none" stroke="#d5d9e6" strokeOpacity="0.6" />
      <g fontSize="8" textAnchor="middle" dominantBaseline="central">
        {percents.map(([x, y, t]) => <text key={t} x={x} y={y} fill="#000" fillOpacity="0.62">{t}</text>)}
        {marks.map(([x, y, t]) => <text key={t} x={x} y={y} fill="#555" direction={/[آ-ی]/.test(t) ? 'rtl' : 'ltr'}>{t}</text>)}
      </g>
      <path d={`M${nx} ${ny}L${-nx / 10} ${-ny / 10}`} stroke="#000" strokeWidth="2" />
      <circle r="3.800" fill="#000" />
      <rect x={-25} y={10} width={51} height={19} rx="1.500" fill="#fff" stroke="#d0d0d0" />
      <text x={0.5} y={19.500} fontSize="7" fontWeight="700" textAnchor="middle" dominantBaseline="central" direction="rtl">{value}</text>
    </svg>
  );
}

function Card({ title, children }: { title: string; children: ReactNode }) {
  return (
    <section className="shrink-0 overflow-hidden rounded-md border border-[#cbd3df] bg-white shadow-[0_4px_10px_rgba(40,60,110,0.08)]">
      <header dir="rtl" className="flex h-[34px] items-center justify-between bg-[#e2e8f0] pr-1 pl-2.5 text-[#1f2430]">
        <h2 className="pb-1.5 text-[11px] leading-4">{title}</h2>
        <button type="button" aria-label="راهنما" className="text-[#50586a]">
          <Icon size="size-3.5" box={14}><circle cx="7" cy="7" r="6.200" /><path d="M7 6.500v3.500M7 4v.3" strokeWidth="1.300" /></Icon>
        </button>
      </header>
      {children}
    </section>
  );
}

function Panel() {
  return (
    <main className="relative flex w-[404px] shrink-0 flex-col gap-4 overflow-hidden bg-[#fdfdfe] pt-3.5 pr-[15px] pl-6">
      <div className="absolute top-1 bottom-[5px] left-[3px] w-1 rounded-full bg-[#808080]" />
      <Card title="نرم‌افزار تعادلی">
        <Gauge
          height={145}
          needle={[-67, -34]}
          value="قیمت : ۴,۹۲۲"
          percents={[[-63, -23, '۶۰.۷۲%'], [-53, -50, '۲۶.۹۹%'], [-17, -75, '۴.۴۱%'], [21, -70, '۱.۹۸%'], [53, -55, '۱.۶۳%'], [68, -17, '۴.۲۷%']]}
          marks={[[-1, -107, 'قیمت تعادلی : ۱۶,۲۷۲'], [-99, -53, 'حداقل'], [-99, -41, '۵,۵۶۱'], [98, -55, 'حداکثر'], [102, -43, '۲۶,۹۸۳']]}
        />
        <div className="flex justify-center pt-px pb-[11px]">
          <span dir="rtl" className="flex h-[21px] w-[127px] items-center justify-center rounded-full border border-[#8f2f3e] text-[9px] text-[#b04a55]">
            <span>آهنگ رشد تعادلی : <bdi dir="ltr">(۱۰,۴۲%)</bdi></span>
          </span>
        </div>
      </Card>
      <Card title="گیج P/S">
        <Gauge
          height={156}
          needle={[-29, -69]}
          value="آخرین : ۱.۶۳"
          percents={[[-68, -18, '۱۰.۴۲%'], [-58, -51, '۲۸.۰۷%'], [-20, -68, '۳۰.۷۹%'], [20, -69, '۲۰.۸۹%'], [54, -54, '۳.۱۸%'], [68, -20, '۶.۶۶%']]}
          marks={[[-91, -51, '۱.۰'], [-55, -87, '۱.۵'], [3, -101, '۲.۰'], [49, -88, '۳.۱'], [89, -48, '۴.۱']]}
        />
      </Card>
      <Card title="گیج P/E">
        <Gauge
          height={156}
          needle={[-66, -36]}
          value="آخرین : ۳.۱۸"
          percents={[[-68, -18, '۱۰.۰۴%'], [-53, -51, '۳۴.۵۸%'], [-20, -68, '۲۴.۳۳%'], [19, -69, '۱۹.۷۹%'], [54, -54, '۲.۵۲%'], [69, -20, '۸.۷۴%']]}
          marks={[[-89, -51, '۳.۴'], [-55, -86, '۵.۱'], [4, -101, '۶.۸'], [49, -88, '۱۰.۲'], [91, -48, '۱۳.۶']]}
        />
      </Card>
    </main>
  );
}

function RailButton({ name, active, dot, children }: { name: string; active?: boolean; dot?: boolean; children: ReactNode }) {
  return (
    <button type="button" aria-label={name} className={`relative flex size-6 items-center justify-center rounded-sm ${active ? 'bg-[#c9eee2] text-[#12a87b]' : 'text-[#4a5163]'}`}>
      <Icon size="size-3.5" box={16} weight={1.3}>{children}</Icon>
      {dot && <span className="absolute -top-1.5 right-0.5 size-1.5 rounded-full bg-[#12b07f]" />}
    </button>
  );
}

function Rail() {
  return (
    <nav className="relative mt-[5px] flex w-[35px] shrink-0 flex-col items-start border-l border-[#b9bdc7] pl-[3px]">
      <button type="button" aria-label="منو" className="flex h-[23px] w-6 items-center justify-center text-[#50586a]">
        <Icon size="size-4" box={16} weight={1.2}><path d="M1.500 3.500h13M1.500 7.500h13M1.500 11.500h13" /></Icon>
      </button>
      <div className="-ml-[3px] mt-3 mb-[19px] w-[26px] border-t border-[#b9bdc7]" />
      <RailButton name="یادداشت"><path d="M2 3h12v12H2zM5 1v3M8 1v3M11 1v3M5 7.500h6M5 10.500h6" /></RailButton>
      <div className="h-[21px]" />
      <RailButton name="نمودار" dot><path d="M1.500 1.500v13h13M4 10l3.500-4 2.500 2.500 4.500-4" /></RailButton>
      <div className="h-[7px]" />
      <RailButton name="گیج" active><circle cx="8" cy="8" r="7" /><path d="M7 1V8.500h8M7 8.500 11 14.200M10 3v5.500" /></RailButton>
      <div className="h-[11px]" />
      <RailButton name="گفتگو"><path d="M3.500 10.500C.5 7 2.500 1 7 1c3 0 5 2 5.200 4.200M3.500 10.500l-2 1.500h4" /><path d="M10 14.800c-6 0-6-9 0-9 4.500 0 5.500 4.500 3.500 7l1.500 2z" /></RailButton>
      <div className="h-[11px]" />
      <RailButton name="کتابخانه"><path d="M8 3.500v9M8 3.500C6 2 4 2 1 2v10c3 0 5 0 7 1 2-1 4-1 7-1V2C12 2 10 2 8 3.500zM3 14.500h4l1 1 1-1h4" /></RailButton>
      <div className="h-3" />
      <RailButton name="ویدیو"><rect x=".5" y="3.500" width="10.500" height="9" rx="1" /><path d="M11 7l4-2v6l-4-2" /></RailButton>
      <div className="h-[22px]" />
      <RailButton name="اعلان" dot><path d="M2 12.500c1-1 1.500-2 1.500-5.500 0-5.500 9-5.500 9 0 0 3.500.5 4.500 1.500 5.500zM6.500 12.700c0 3 3 3 3 0M8 2.800V1M4 9.500h8" /></RailButton>
      <div className="absolute right-[5px] bottom-0 h-[58px] w-1 bg-[#f1f1f3]" />
    </nav>
  );
}

export default function App() {
  return (
    <div className={`flex h-screen w-full overflow-hidden border-4 border-b-[5px] border-[#808080] bg-white ${FA}`}>
      <div className="flex min-w-0 flex-1 flex-col">
        <div className="flex min-h-0 flex-1">
          <DrawingBar />
          <div className="flex min-w-0 flex-1 flex-col">
            <TopBar />
            <ChartArea />
            <ChartFooter />
          </div>
        </div>
        <BottomBar />
      </div>
      <div className="w-2 shrink-0 border-l-4 border-[#dfe3ec] bg-[#f0f2f8]" />
      <Panel />
      <Rail />
    </div>
  );
}
